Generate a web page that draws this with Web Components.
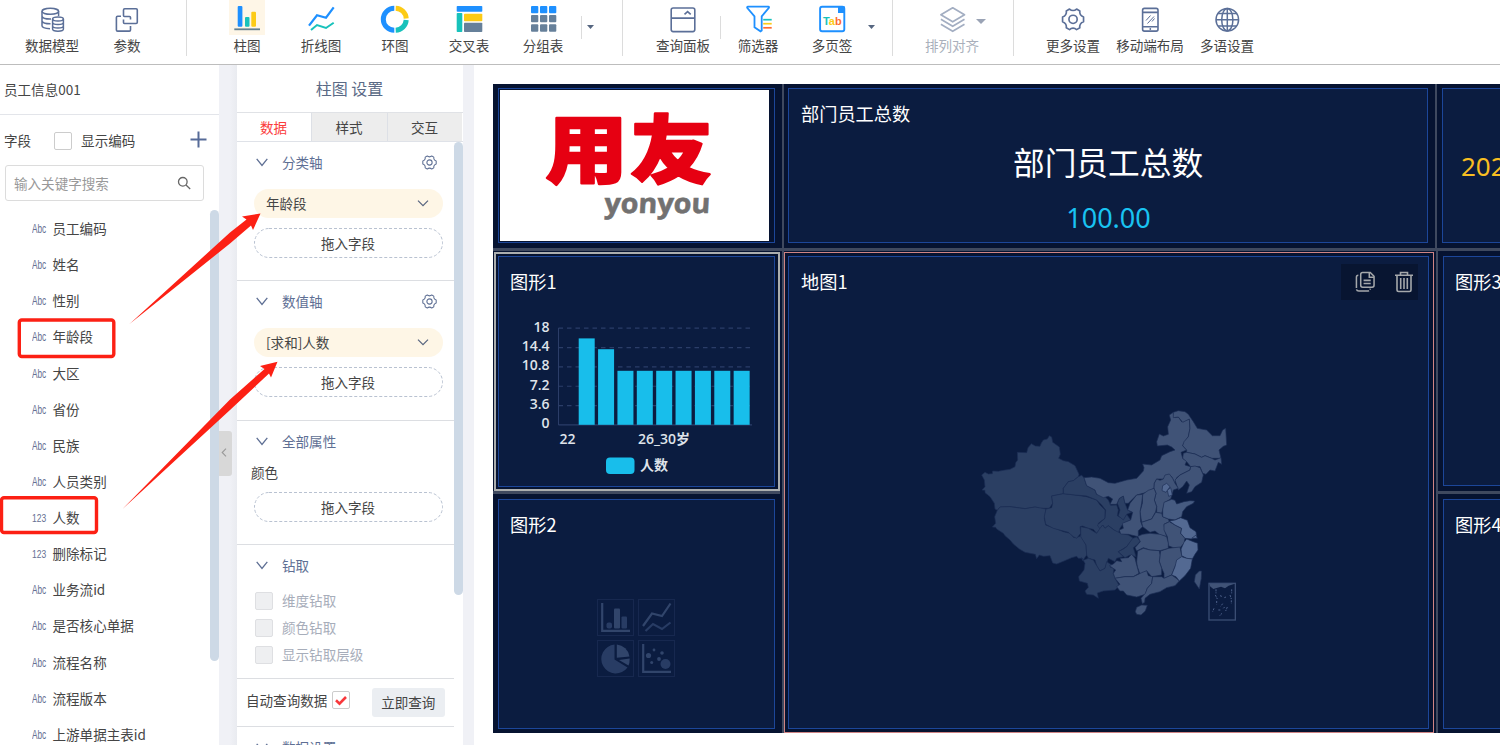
<!DOCTYPE html>
<html lang="zh-CN">
<head>
<meta charset="utf-8">
<title>柱图 设置</title>
<style>
html,body{margin:0;height:100%}
body{width:1500px;height:745px;overflow:hidden;position:relative;background:#fff;font-family:"Noto Sans CJK SC","Noto Sans",sans-serif;font-size:13.55px;line-height:18px;color:#454545}
</style>
</head>
<body>
<report-designer></report-designer>
<script>
function define(name, html, setup) {
  const tpl = document.createElement('template');
  tpl.innerHTML = html;
  customElements.define(name, class extends HTMLElement {
    constructor() {
      super();
      this.attachShadow({mode: 'open'}).appendChild(tpl.content.cloneNode(true));
    }
    connectedCallback() { if (setup && !this.ready) { this.ready = true; setup(this, this.shadowRoot); } }
  });
}

const GEAR = '<path d="M8.400 1.500q1.600 1.500 3.600 1.500t3.600-1.500l3.300 1.900q-.3 2.300.6 3.800t3.200 2.400v4.800q-2.200.7-3.200 2.400t-.6 3.800l-3.300 1.900q-1.600-1.500-3.600-1.500t-3.600 1.500l-3.300-1.900q.3-2.300-.6-3.800t-3.200-2.400V9.600q2.200-.7 3.200-2.400t.6-3.800z"/><circle cx="12" cy="12" r="4.200"/>';

const ICONS = {
  model: '<g fill="none" stroke="#5b6f98" stroke-width="1.500"><ellipse cx="16.300" cy="10.300" rx="8.300" ry="3"/><path d="M8 10.300v14.500c0 1.600 3 2.700 8 2.900M24.600 10.300V15M8 15.300c.5 1.800 4 2.900 9 2.800M8 20c.5 1.700 4 2.800 8.500 2.800"/><ellipse cx="24" cy="18" rx="5.400" ry="2"/><path d="M18.600 18v10c0 1.300 2.500 2.200 5.400 2.200s5.400-.9 5.400-2.200V18M18.600 21.500c0 1.200 2.500 2 5.400 2s5.400-.8 5.400-2M18.600 25c0 1.200 2.500 2 5.400 2s5.400-.8 5.400-2"/></g>',
  param: '<g fill="none" stroke="#5b6f98" stroke-width="1.600"><path d="M21.500 18.500v-2q0-1-1-1h-5q-1 0-1-1V9q0-1.200 1.200-1.200h11.400q1.200 0 1.200 1.200v12.300q0 1.200-1.200 1.200H15.500q-1 0-1-1v-3"/><path d="M12 15.300H8.600q-1.200 0-1.200 1.200v12.400q0 1.200 1.200 1.200h11.700q1.200 0 1.200-1.200V25"/></g>',
  bar: '<rect x="8.700" y="5" width="4.700" height="20.700" rx="1" fill="#1e90ff"/><rect x="16" y="16" width="4.500" height="9.700" rx="1" fill="#18c2bb"/><rect x="22.300" y="10.700" width="4.700" height="15" rx="1" fill="#fccb16"/><path d="M5.300 28.300H31" stroke="#62808f" stroke-width="1.800"/>',
  line: '<path d="M6 24.700 14 14.300 23 16.700 30.700 6.300" fill="none" stroke="#1e90ff" stroke-width="2.200"/><path d="M8 29 14 24 23 27 30.700 21.700" fill="none" stroke="#18c2bb" stroke-width="2"/>',
  ring: '<g fill="none" stroke-width="5"><path d="M17.300 7.200a11 11 0 0 0 0 22" stroke="#1e90ff"/><path d="M18.700 7.200A11 11 0 0 1 29.200 17.500" stroke="#fccb16"/><path d="M29.200 19A11 11 0 0 1 18.700 29.200" stroke="#18c2bb"/></g>',
  cross: '<rect x="5.700" y="5" width="25.600" height="5.700" rx=".8" fill="#1e90ff"/><rect x="5.700" y="12" width="5.600" height="19" rx=".8" fill="#18c2bb"/><rect x="13" y="12.700" width="18.300" height="7.600" rx=".8" fill="#fccb16"/><rect x="13" y="21.700" width="18.300" height="9.300" rx=".8" fill="#66809a"/>',
  group: '<g fill="#1e90ff"><rect x="6" y="5" width="7.300" height="7.200" rx="1"/><rect x="15" y="5" width="7.300" height="7.200" rx="1"/><rect x="24" y="5" width="7.300" height="7.200" rx="1"/></g><g fill="#66809a"><rect x="6" y="14" width="7.300" height="7.300" rx="1"/><rect x="15" y="14" width="7.300" height="7.300" rx="1"/><rect x="24" y="14" width="7.300" height="7.300" rx="1"/><rect x="6" y="23.300" width="7.300" height="7.500" rx="1"/><rect x="15" y="23.300" width="7.300" height="7.500" rx="1"/><rect x="24" y="23.300" width="7.300" height="7.500" rx="1"/></g>',
  query: '<g fill="none" stroke="#5b6f98" stroke-width="1.600"><rect x="6.200" y="7" width="23.600" height="23.600" rx="2"/><path d="M6.200 17.100h23.600M19.500 13.400l3.100-2.800 3.100 2.800"/></g>',
  filter: '<path d="M8 5.600h20.300q1 .2.600 1.200L21.700 15.300v14.200l-1.200.8-6-4V15.300L7.200 6.800q-.3-1 .8-1.200z" fill="none" stroke="#1e90ff" stroke-width="1.800"/><path d="M23.200 18.700h8.500" stroke="#18c2bb" stroke-width="1.700"/><path d="M23.200 22.700h8.500" stroke="#fccb16" stroke-width="1.700"/><path d="M23.200 26.800h8.500" stroke="#ff6b30" stroke-width="1.700"/>',
  tab: '<rect x="6.100" y="5.800" width="24.200" height="24.500" rx="2" fill="#fff" stroke="#1e90ff" stroke-width="1.900"/><path d="M24 5.500h7v6.500h-7z" fill="#1e90ff"/><text x="9" y="24.300" font-family="Liberation Sans" font-weight="700" font-size="11" textLength="18.700"><tspan fill="#18c2bb">T</tspan><tspan fill="#fccb16">a</tspan><tspan fill="#ff6b30">b</tspan></text>',
  align: '<g fill="none" stroke="#a3aec2" stroke-width="1.700" stroke-linejoin="round"><path d="M18.700 6.800 30.500 13.700 18.700 20.800 6.900 13.700Z"/><path d="M6.900 18.300 18.700 25.300 30.500 18.300M6.900 23.300 18.700 30.300 30.500 23.300"/></g>',
  gear: '<g transform="translate(6.300 6.600) scale(.98)" fill="none" stroke="#5b6f98" stroke-width="1.700" stroke-linejoin="round">' + GEAR + '</g>',
  phone: '<g fill="none" stroke="#5b6f98" stroke-width="1.600"><rect x="10.600" y="7.400" width="15.400" height="22.700" rx="1.800"/><path d="M10.600 11.400H26M10.600 25.800H26"/><path d="m14 19.500 4.500-5M15.500 22.500l6.500-7M20 20.500l2.500-3" stroke-width="1"/></g><circle cx="18.300" cy="28" r=".9" fill="#5b6f98"/>',
  globe: '<g fill="none" stroke="#5b6f98" stroke-width="1.500"><circle cx="18.300" cy="18.700" r="11.300"/><ellipse cx="18.300" cy="18.700" rx="5.600" ry="11.300"/><path d="M18.300 7.400V30M7 18.700h22.600M9.300 12.500h18M9.300 25h18"/></g>'
};

define('tool-item', `
<style>
:host{display:block;flex:none;width:74px;height:64px;margin-left:var(--gap,0);text-align:center;position:relative;color:#454545}
:host([muted]){color:#a9afbb}
.ic{width:36px;height:35px;margin:0 auto;padding-top:1px;box-sizing:border-box}
:host([active]) .ic{background:#fef6e7}
svg{display:block;width:36px;height:36px}
.t{white-space:nowrap;display:flex;justify-content:center;padding-top:1px}
i{display:none}
:host([caret]) i{display:block;position:absolute;left:61px;top:19px;border:5px solid transparent;border-top-color:#9aa3b5;border-bottom:0}
</style><div class="ic"><svg viewBox="0 0 36 36"></svg></div><div class="t"><slot></slot></div><i></i>`,
(el, root) => { root.querySelector('svg').innerHTML = ICONS[el.getAttribute('icon')]; });

define('tool-divider', `<style>:host{display:block;flex:none;width:1px;height:56px;background:#dcdcdc;margin-left:var(--gap,0)}:host([short]){height:23px;margin-top:16px}</style>`);
define('tool-caret', `<style>:host{display:block;flex:none;width:7px;margin-left:var(--gap,0);margin-top:25px}svg{display:block}</style><svg width="7" height="4" viewBox="0 0 7 4"><path d="M0 0h7L3.500 4z" fill="#566680"/></svg>`);

define('app-toolbar', `
<style>:host{display:flex;height:64px;border-bottom:1px solid #bdbdbd;background:#fff;flex:none}</style>
<tool-item icon="model" style="--gap:15px">数据模型</tool-item>
<tool-item icon="param" style="--gap:1px">参数</tool-item>
<tool-divider style="--gap:22px"></tool-divider>
<tool-item icon="bar" active style="--gap:23px">柱图</tool-item>
<tool-item icon="line">折线图</tool-item>
<tool-item icon="ring">环图</tool-item>
<tool-item icon="cross">交叉表</tool-item>
<tool-item icon="group">分组表</tool-item>
<tool-divider short style="--gap:1px"></tool-divider>
<tool-caret style="--gap:5px"></tool-caret>
<tool-divider style="--gap:28px"></tool-divider>
<tool-item icon="query" style="--gap:23px">查询面板</tool-item>
<tool-divider short></tool-divider>
<tool-item icon="filter">筛选器</tool-item>
<tool-item icon="tab">多页签</tool-item>
<tool-caret style="--gap:-1px"></tool-caret>
<tool-divider style="--gap:17px"></tool-divider>
<tool-item icon="align" muted caret style="--gap:22px">排列对齐</tool-item>
<tool-divider style="--gap:24px"></tool-divider>
<tool-item icon="gear" style="--gap:22px">更多设置</tool-item>
<tool-item icon="phone" style="--gap:3px">移动端布局</tool-item>
<tool-item icon="globe" style="--gap:3px">多语设置</tool-item>`);

define('check-box', `
<style>:host{display:block;flex:none;width:16px;height:16px;border:1px solid #ccc;border-radius:2px;background:#fff}
:host([disabled]){background:#eeeff1;border-color:#dedfe2}
svg{display:none;width:16px;height:16px}:host([checked]) svg{display:block}</style>
<svg viewBox="0 0 16 16"><path d="M3 8.300 6.500 11.600 13 5" fill="none" stroke="#f8383b" stroke-width="2.600"/></svg>`);

define('field-row', `
<style>:host{display:flex;align-items:center;height:36.140px;padding-left:32px}
b{font:12.500px/18px "Liberation Sans",sans-serif;color:#667093;width:20.500px;height:16px}
span{display:block;transform:scaleX(.66);transform-origin:0 50%}
span.n{transform:scaleX(.72);font-size:11.800px}</style>
<b><span></span></b><slot></slot>`,
(el, root) => { const s = root.querySelector('span'); const n = el.hasAttribute('numeric'); s.textContent = n ? '123' : 'Abc'; if (n) s.className = 'n'; });

define('field-panel', `
<style>
:host{display:flex;flex-direction:column;width:219px;flex:none;background:#fff;overflow:hidden}
.name{height:50px;line-height:48px;padding-left:4px;border-bottom:1px solid #e3e5ea;box-sizing:border-box;flex:none}
.head{display:flex;align-items:center;height:50px;padding-left:4px;flex:none}
.head check-box{margin:1px 9px 0 23px}
.head span{margin-top:-1px}
.plus{margin:-1px 0 0 55px}
.search{flex:none;box-sizing:border-box;width:199px;height:36px;margin:0 0 0 5px;border:1px solid #dcdcdc;border-radius:3px;display:flex;align-items:center;justify-content:space-between;padding:0 12px 0 8px;color:#999}
.body{display:flex;justify-content:space-between;padding-top:9px;flex:1;min-height:0;box-sizing:border-box;overflow:hidden;align-items:flex-start}
.bar{width:9px;height:451px;border-radius:5px;background:#cdd9e6;flex:none}
.rows{flex:1;white-space:nowrap}
svg{display:block}
</style>
<div class="name">员工信息001</div>
<div class="head"><span>字段</span><check-box></check-box><span>显示编码</span>
<svg class="plus" width="17" height="17" viewBox="0 0 17 17"><path d="M8.500.5v16M.5 8.500h16" stroke="#566b98" stroke-width="2"/></svg></div>
<div class="search"><span>输入关键字搜索</span><svg width="14" height="14" viewBox="0 0 14 14" fill="none" stroke="#666" stroke-width="1.300"><circle cx="5.800" cy="5.800" r="4.300"/><path d="m9 9 4.200 4"/></svg></div>
<div class="body"><div class="rows">
<field-row>员工编码</field-row><field-row>姓名</field-row><field-row>性别</field-row><field-row>年龄段</field-row><field-row>大区</field-row><field-row>省份</field-row><field-row>民族</field-row><field-row>人员类别</field-row><field-row numeric>人数</field-row><field-row numeric>删除标记</field-row><field-row>业务流id</field-row><field-row>是否核心单据</field-row><field-row>流程名称</field-row><field-row>流程版本</field-row><field-row>上游单据主表id</field-row>
</div><div class="bar"></div></div>`);

define('collapse-handle', `
<style>:host{display:flex;flex:none;width:18px;background:linear-gradient(90deg,#f0f1f6 60%,#e9ebf0);align-items:flex-start}
div{margin-top:366px;width:13px;height:45px;background:#d8d8d8;border-radius:0 3px 3px 0;display:flex;align-items:center;justify-content:center;box-sizing:border-box;padding:0 3px 2px 0}</style>
<div><svg width="6" height="9" viewBox="0 0 6 9"><path d="M5 .7 1.200 4.500 5 8.300" fill="none" stroke="#999" stroke-width="1.100"/></svg></div>`);

define('drop-slot', `
<style>:host{display:block;margin:var(--m,10px 0 0 17px);width:189px;height:30px}
div{position:relative;height:100%;display:flex;align-items:center;justify-content:center}
svg{position:absolute;inset:0;width:189px;height:30px}span{position:relative;margin:-1px 1px 0 0}</style>
<div><svg><rect x=".5" y=".5" width="188" height="29" rx="14.500" fill="none" stroke="#b9c2d1" stroke-dasharray="3 2"/></svg><span><slot>拖入字段</slot></span></div>`);

define('field-pill', `
<style>:host{display:flex;box-sizing:border-box;margin-left:17px;width:189px;height:29px;border-radius:15px;background:#fef6e6;align-items:center;justify-content:space-between;padding:0 14px 0 12px}span{margin-top:-2px}</style>
<span><slot></slot></span><svg width="12" height="7" viewBox="0 0 12 7"><path d="M1 .7 6 5.700 11 .7" fill="none" stroke="#56647f" stroke-width="1.200"/></svg>`);

define('setting-section', `
<style>:host{display:block;box-sizing:border-box;width:217px;height:var(--h);border-bottom:1px solid #dcdee2}
.h{display:flex;align-items:center;height:41px;padding:0 17px 3px 19px;color:#5e6f94}
.h span{flex:1;padding-left:14px;margin-top:-1px}
.g{display:none}:host([gear]) .g{display:block}
.c{padding-top:3px}</style>
<div class="h"><svg width="12" height="9" viewBox="0 0 12 9"><path d="M.7.8 6 7.500 11.300.8" fill="none" stroke="#5e6f94" stroke-width="1.300"/></svg><span><slot name="title"></slot></span>
<svg class="g" width="15" height="15" viewBox="0 0 24 24" fill="none" stroke="#5e6f94" stroke-width="1.700" stroke-linejoin="round">${GEAR}</svg></div>
<div class="c"><slot></slot></div>`);

define('check-line', `<style>:host{display:flex;align-items:center;height:27px;padding-left:18px;gap:9px;color:#a7adba}span{margin-top:-1px}</style><check-box disabled></check-box><span><slot></slot></span>`);

define('settings-panel', `
<style>
:host{display:flex;flex-direction:column;width:226px;flex:none;background:#fff;overflow:hidden}
.title{height:47px;line-height:46px;text-align:center;font-size:16px;color:#5a6a86;border-bottom:1px solid #e0e2e6;flex:none;padding-right:1px}
.tabs{display:grid;grid-template-columns:74px 76px 75px;height:28px;border-bottom:1px solid #dfe2e8;flex:none;line-height:28px;text-align:center}
.tabs div{background:#ededed;border-left:1px solid #dde0e6;box-sizing:border-box;height:28px;padding-right:1px}
.tabs .on{background:#fff;color:#fb3d3d;border:0}
.body{display:flex;justify-content:space-between;height:603px;overflow:hidden;align-items:flex-start}
.bar{width:9px;height:453px;border-radius:5px;background:#cdd9e6;flex:none}
.label{padding-left:14px;margin-top:-8px;height:28px;line-height:24px}
.auto{display:flex;height:47px;border-bottom:1px solid #dcdee2;padding-left:9px;width:208px;align-items:flex-start}
.auto span{margin-top:12px}.auto check-box{margin:12px 0 0 5px}
.auto button{font:inherit;color:#444;border:0;border-radius:3px;background:#ebeef2;width:73px;height:29px;padding:0 1px 1px 0;margin:9px 0 0 22px}
</style>
<div class="title">柱图 设置</div>
<div class="tabs"><div class="on">数据</div><div>样式</div><div>交互</div></div>
<div class="body"><div>
<setting-section gear style="--h:139px"><span slot="title">分类轴</span><field-pill>年龄段</field-pill><drop-slot></drop-slot></setting-section>
<setting-section gear style="--h:140px"><span slot="title">数值轴</span><field-pill>[求和]人数</field-pill><drop-slot></drop-slot></setting-section>
<setting-section style="--h:124px"><span slot="title">全部属性</span><div class="label">颜色</div><drop-slot style="--m:4px 0 0 17px"></drop-slot></setting-section>
<setting-section style="--h:134px"><span slot="title">钻取</span><check-line style="margin-top:-5px">维度钻取</check-line><check-line>颜色钻取</check-line><check-line>显示钻取层级</check-line></setting-section>
<div class="auto"><span>自动查询数据</span><check-box checked></check-box><button>立即查询</button></div>
<setting-section style="--h:60px"><span slot="title">数据设置</span></setting-section>
</div><div class="bar"></div></div>`);

define('dash-card', `
<style>:host{display:block;box-sizing:border-box;border:1px solid #1c4699;background:#0b1c40;position:relative;color:#fff;overflow:hidden;width:var(--w,auto);height:var(--h,auto);margin:var(--m,0);flex:none}
.t{font-size:18.200px;line-height:26px;padding:11px 0 1px var(--tx,12px);white-space:nowrap}</style>
<div class="t"><slot name="title"></slot></div><slot></slot>`);

define('brand-logo', `
<style>:host{display:block;box-sizing:border-box;width:277px;height:155px;margin:4px 0 0 5px;border:1px solid #1c4699;padding:1px 0 0;flex:none}
div{background:#fff;width:269px;height:151px;margin-left:1px}svg{display:block}</style>
<div><svg width="269" height="151" viewBox="500 90 269 151">
<text transform="translate(545.500 177) scale(1 .9)" font-family="Noto Sans CJK SC" font-weight="900" font-size="82" fill="#e60012" stroke="#e60012" stroke-width="2.500" stroke-linejoin="round" textLength="167">用友</text>
<text transform="translate(604 212.500) skewX(-3)" font-family="Open Sans" font-weight="700" font-size="27.500" fill="#727171" stroke="#727171" stroke-width=".6" textLength="106" lengthAdjust="spacingAndGlyphs">yonyou</text>
</svg></div>`);

define('bar-chart', `
<style>:host{display:block;margin-top:15px}svg{display:block}</style>
<svg width="274" height="180" viewBox="499 310 274 180"></svg>`, (el, root) => {
  const labels = ['18', '14.4', '10.8', '7.2', '3.6', '0'];
  let s = '';
  labels.forEach((t, i) => {
    const y = 328.200 + i * 19.350;
    s += `<path d="M558.500 ${y}H752" stroke="#2b3d68" stroke-width="1.200" ${i < 5 ? 'stroke-dasharray="4.500 4"' : ''}/><text x="549.500" y="${y + 3.500}" text-anchor="end">${t}</text>`;
  });
  s += '<path d="M558.500 328V425" stroke="#2b3d68"/>';
  [16, 14, 10, 10, 10, 10, 10, 10, 10].forEach((v, i) => {
    const h = v * 5.400;
    s += `<rect x="${578.700 + i * 19.370}" y="${424.800 - h}" width="16" height="${h}" fill="#18beeb"/>`;
  });
  s += '<text x="567.500" y="444" text-anchor="middle">22</text><text x="664" y="444" text-anchor="middle">26_30岁</text><rect x="606" y="457.500" width="28.500" height="16.500" rx="4" fill="#18beeb"/><text x="640" y="469.500">人数</text>';
  root.querySelector('svg').innerHTML = `<g font-family="Open Sans, Noto Sans CJK SC" font-weight="600" font-size="14" fill="#dfe3ea">${s}</g>`;
});

define('empty-chart', `
<style>:host{display:grid;grid-template-columns:37px 37px;gap:4px;margin:61px 0 0 98px}svg{width:37px;height:37px;display:block}</style>
<svg viewBox="0 0 37 37"><rect x=".5" y=".5" width="36" height="36" fill="none" stroke="#17284f"/><path d="M5.200 4v27.800H33" fill="none" stroke="#31456b" stroke-width="2.200"/><rect x="9.500" y="23.500" width="5.500" height="6" rx="2" fill="#283c64"/><rect x="17" y="9.500" width="6" height="20" rx="1" fill="#31456b"/><rect x="24.500" y="17.500" width="5.500" height="12" rx="1" fill="#283c64"/></svg>
<svg viewBox="0 0 37 37"><rect x=".5" y=".5" width="36" height="36" fill="none" stroke="#17284f"/><path d="M5 27 14 14.500 24 17 32.500 4.500" fill="none" stroke="#31456b" stroke-width="2.200"/><path d="M7.500 32 15 25 24 30 32.500 23.500" fill="none" stroke="#283c64" stroke-width="2.200"/></svg>
<svg viewBox="0 0 37 37"><rect x=".5" y=".5" width="36" height="36" fill="none" stroke="#17284f"/><path d="M17.500 4.500V19.500L30.500 27.500A14.500 14.500 0 1 1 17.500 4.500Z" fill="#283c64"/><path d="M19.800 4.500A14 14 0 0 1 32.500 16.500L19.800 17.800Z" fill="#31456b"/><path d="M32.700 18.500Q32.700 23 31.500 25.500L22 20Z" fill="#31456b"/></svg>
<svg viewBox="0 0 37 37"><rect x=".5" y=".5" width="36" height="36" fill="none" stroke="#17284f"/><path d="M5.200 4v27.800H33" fill="none" stroke="#31456b" stroke-width="2.200"/><g fill="#31456b"><circle cx="10.500" cy="15.500" r="2.600"/><circle cx="16" cy="10" r="1.400"/><circle cx="24" cy="13" r="1.800"/><circle cx="21" cy="19" r="1.900"/><circle cx="13.700" cy="22.500" r="1.500"/><circle cx="27.500" cy="24" r="5" fill="#283c64"/></g></svg>`);

const PROVINCES = {
  '#2b3f63': [
    '65,240 75,232 85,237 97,236 98,228 115,229 130,226 150,223 165,215 167,203 173,195 172,172 200,173 204,158 214,146 226,153 240,154 244,144 250,135 262,132 268,122 275,126 278,142 298,156 301,178 296,190 310,197 325,200 345,212 357,238 355,245 340,257 325,260 310,280 310,296 275,303 278,325 268,340 240,340 225,336 195,341 150,335 120,336 112,346 105,342 103,325 90,305 75,293 75,286 66,285 75,275 73,255',
    '112,346 120,336 150,335 195,341 225,336 258,342 253,370 257,390 285,400 310,410 330,415 342,428 358,425 362,420 378,450 380,480 368,497 365,490 355,490 350,484 335,488 312,498 290,507 278,504 270,482 250,484 238,480 230,491 226,478 195,472 178,462 160,447 150,435 135,422 130,415 110,402 107,397 97,396 107,385 104,365',
    '275,303 310,296 345,300 380,305 410,315 420,330 435,345 435,370 415,385 422,400 410,415 400,403 385,400 368,393 360,395 362,415 350,430 340,425 325,412 310,408 280,400 257,388 253,365 258,342 275,338 278,325',
    '310,296 310,280 325,260 340,257 355,245 365,241 372,248 380,272 405,285 410,298 430,300 445,315 452,331 470,330 475,345 472,362 490,372 500,358 512,375 490,385 480,400 475,415 462,405 445,392 435,400 428,390 420,402 412,390 435,370 437,345 425,330 410,315 380,303 345,300',
    '478,310 490,303 495,325 503,345 515,352 500,358 490,375 475,362 480,345 472,325',
    '362,395 385,400 410,415 420,400 428,390 435,400 445,392 462,405 482,415 505,420 520,430 500,455 475,470 490,485 470,490 465,500 445,490 435,520 420,528 410,512 405,495 385,490 380,480 378,450 362,425',
    '475,470 490,462 500,455 518,430 530,426 541,438 533,448 520,458 528,485 510,480 495,488',
    '365,488 372,495 385,490 400,495 410,512 420,528 435,520 440,500 455,510 450,516 462,520 460,535 468,555 478,572 465,585 430,588 412,594 415,610 400,600 380,598 375,588 385,577 382,565 358,558 356,545 372,525 375,505'
  ],
  '#405377': [
    '372,248 395,246 420,250 445,263 465,265 500,255 530,250 550,228 552,218 548,207 575,210 600,195 605,182 630,170 645,165 635,156 622,150 592,153 590,140 598,117 610,123 625,118 623,95 632,75 628,60 640,52 645,68 655,66 665,80 688,72 690,100 685,125 675,140 668,152 680,165 663,172 668,190 680,198 675,210 692,215 690,225 660,240 650,248 645,265 635,245 625,240 610,252 590,252 583,265 582,280 560,292 530,300 505,325 495,325 490,303 478,310 470,328 450,328 458,312 445,304 430,308 410,298 405,285 380,272',
    '640,52 655,47 675,50 685,58 700,80 712,100 740,105 757,122 780,122 788,105 797,100 800,150 790,154 777,165 783,190 755,190 735,182 725,187 705,177 680,172 680,165 668,152 672,140 685,125 690,100 688,72 668,82 655,66 640,68',
    '670,175 680,172 705,177 725,187 735,182 755,190 765,195 783,188 785,208 775,202 770,215 765,228 750,225 738,238 728,235 720,215 692,215 680,200 668,190',
    '692,215 705,213 720,218 730,240 725,262 705,275 695,290 680,295 688,270 680,258 668,275 655,285 650,270 645,255 660,240 690,225',
    '583,265 590,252 600,256 610,252 615,240 628,237 638,250 645,265 655,280 640,285 636,300 632,312 615,322 608,345 605,355 590,352 590,335 583,315 588,295 582,280',
    '548,298 565,286 582,280 588,295 583,315 590,335 587,350 575,372 545,382 540,350 547,325',
    '530,300 548,298 545,325 540,350 542,380 548,395 535,407 535,425 505,418 482,417 478,405 490,400 487,385 512,375 518,352 503,345 510,325',
    '587,352 605,355 608,365 625,372 628,380 612,388 615,408 620,425 600,420 585,408 570,412 548,395 545,382 575,372',
    '612,388 628,380 645,390 665,400 662,415 675,430 672,445 660,458 640,458 625,452 622,425 612,405',
    '600,480 602,468 625,460 660,456 665,480 670,488 655,495 645,515 635,540 612,550 612,535 605,520 598,500',
    '533,424 548,418 570,415 600,418 620,425 625,445 625,460 600,467 570,465 550,458 530,468 525,458 541,440',
    '533,468 550,460 570,465 598,467 600,480 598,500 605,520 605,540 575,545 560,528 540,538 532,515 530,500',
    '448,512 460,507 470,497 485,500 480,490 505,488 515,478 525,490 530,510 537,535 520,545 495,545 465,550 460,535 467,525',
    '465,550 495,545 520,545 545,533 560,527 565,542 578,545 575,565 562,580 556,598 530,606 500,600 490,588 480,588 470,575 480,568',
    '578,545 605,545 612,550 635,540 652,552 658,558 645,572 620,578 600,590 570,598 555,610 554,622 547,626 543,610 556,595 562,580 575,565',
    '526,650 530,637 545,630 562,631 556,648 543,660 530,658',
    '718,528 725,528 724,550 718,582 703,560 706,540'
  ],
  '#465b81': ['612,322 635,313 645,316 650,327 672,320 690,317 704,318 700,325 680,335 668,350 665,365 645,375 625,372 608,365 608,345'],
  '#536992': [
    '628,378 645,375 662,368 682,376 690,398 708,410 710,425 695,432 675,430 662,415 665,400 645,390',
    '672,442 680,432 700,440 713,445 714,465 705,478 697,492 680,490 665,482 663,462',
    '665,485 680,490 697,492 692,520 675,542 658,558 648,545 635,540 645,515 650,495',
    '608,272 620,265 630,275 618,292 606,287', '622,286 632,278 637,300 626,304', '695,430 708,420 712,430'
  ]
};

define('china-map', `
<style>:host{display:block;margin:100px 0 0 171px;width:300px}svg{display:block}</style>
<svg width="300" height="240" viewBox="0 0 900 720"></svg>`, (el, root) => {
  let s = '';
  for (const color in PROVINCES) for (const p of PROVINCES[color]) s += `<polygon points="${p}" fill="${color}"/>`;
  root.querySelector('svg').innerHTML = `<g stroke="#1b2e54" stroke-width="2" stroke-linejoin="round">${s}</g>
  <rect x="747" y="565" width="79" height="110" fill="none" stroke="#3a4d73" stroke-width="4"/>
  <path d="M748 567H822L806 572 795 580 783 575 770 579 760 582 750 574Z" fill="#405377"/>
  <path d="M768 583v12M766 600l6 12M770 618v10M762 640l-4 10M815 583v12M810 600l4 12M814 616v10M802 636l-5 12M780 602l8 3M788 626l-6 8M775 645h7M786 655l-8 8M798 606l-5 2M790 640l4-4" stroke="#4c608a" stroke-width="3" fill="none" stroke-dasharray="6 3"/>`;
});

define('card-actions', `
<style>:host{position:absolute;right:10px;top:7px;width:77px;height:36px;background:#081531;display:flex;align-items:center;justify-content:flex-end;gap:20px;padding-right:5px;box-sizing:border-box}svg{display:block}</style>
<svg width="20" height="22" viewBox="0 0 21 22" fill="none" stroke="#a5a8ab" stroke-width="1.600"><path d="M8 1h8l4 4v9.500q0 2-2 2H8q-2 0-2-2V3q0-2 2-2z"/><path d="M15 1.300V6h4.800M9 9.300h7.500M9 12.500h7.500"/><path d="M3.500 4Q1.500 4 1.500 6v12q0 2.500 2.500 2.500h9q2.500 0 3-2.500" stroke-dasharray="14 1.500"/></svg>
<svg width="18" height="22" viewBox="0 0 18 22" fill="none" stroke="#a5a8ab" stroke-width="1.600"><path d="M0 4.200h18M5.500 4V1.500h7V4M2 4.500v14.300q0 1.700 1.700 1.700h10.600q1.700 0 1.700-1.700V4.500M5.700 7v11M9 7v11M12.300 7v11"/></svg>`);

define('dash-board', `
<style>
:host{display:block;width:1007px;height:649px;margin:19px 0 0 19px;background:#061331;overflow:hidden;font-family:"Noto Sans CJK SC",sans-serif}
.row{display:flex}.top{height:164px}.h{height:3px;background:#3f495f}
.v{width:2px;background:#3f495f;flex:none}
.kpi .b{font-size:31.700px;line-height:44px;text-align:center;margin-top:12px}
.kpi .n{font:27px/36px "Noto Sans",sans-serif;color:#19c3f2;text-align:center;margin:17px 0 0 1px}
.kpi .y{font:26px/36px "Noto Sans",sans-serif;color:#f8be22;padding:47px 0 0 18px}
.col{flex:none}.bot{height:482px}
.sel{box-sizing:border-box;width:286px;height:239px;margin:1px 0 0 1px;border:2px solid #abaeaf;padding:2px 0 0 2px}
.pink{flex:none;box-sizing:border-box;width:650px;height:481px;margin:1px 0 0;border:1px solid #cf8484}
</style>
<div class="row top">
<div class="col" style="width:289px"><brand-logo></brand-logo></div><div class="v"></div>
<dash-card class="kpi" style="--w:640px;--h:155px;--m:4px 7px 0 4px"><span slot="title">部门员工总数</span><div class="b">部门员工总数</div><div class="n">100.00</div></dash-card>
<div class="v"></div>
<dash-card class="kpi" style="--w:90px;--h:155px;--m:4px 0 0 5px"><div class="y">202</div></dash-card>
</div>
<div class="h"></div>
<div class="row bot">
<div class="col" style="width:289px"><div class="sel"><dash-card style="--w:277px;--h:231px;--tx:11px"><span slot="title">图形1</span><bar-chart></bar-chart></dash-card></div><div class="h" style="width:287px"></div>
<dash-card style="--w:277px;--h:230px;--m:5px 0 0 5px;--tx:11px"><span slot="title">图形2</span><empty-chart></empty-chart></dash-card></div>
<div class="v"></div>
<div class="pink"><dash-card style="--w:641px;--h:473px;--m:3px 0 0 3px"><span slot="title">地图1</span><china-map></china-map><card-actions></card-actions></dash-card></div>
<div class="v" style="margin-left:2px"></div>
<div class="col" style="width:90px"><dash-card style="--w:90px;--h:230px;--m:5px 0 0 5px;--tx:11px"><span slot="title">图形3</span></dash-card><div class="h" style="margin-top:5px"></div><dash-card style="--w:90px;--h:230px;--m:5px 0 0 5px;--tx:11px"><span slot="title">图形4</span></dash-card></div>
</div>`);

define('guide-marks', `
<style>:host{position:absolute;inset:0;pointer-events:none}svg{display:block}</style>
<svg width="1500" height="745" viewBox="0 0 1500 745"><g fill="none" stroke="#fc2014" stroke-width="3.400"><rect x="19.300" y="320" width="94.500" height="36.500" rx="2.500"/><rect x="1.500" y="497.700" width="95" height="34.800" rx="2.500"/></g>
<g fill="#fc2014"><path d="M129.500 324 230 232.500 246.500 219.500 242 216.500 260.500 213.500 253 230 251 225.500 230 243.500Z"/><path d="M122.500 509 230 399.500 264.500 369 260 366 277.500 361.800 271 377.500 269 373.500 230 410Z"/></g></svg>`);

define('report-designer', `
<style>:host{display:flex;flex-direction:column;height:745px}
main{display:flex;height:680px}
.edge{width:11px;flex:none;background:#f0f1f6}
.canvas{flex:1;background:#fff;min-width:0;display:flow-root}</style>
<app-toolbar></app-toolbar>
<main><field-panel></field-panel><collapse-handle></collapse-handle><settings-panel></settings-panel><div class="edge"></div><div class="canvas"><dash-board></dash-board></div></main>
<guide-marks></guide-marks>`);
</script>
</body>
</html>
